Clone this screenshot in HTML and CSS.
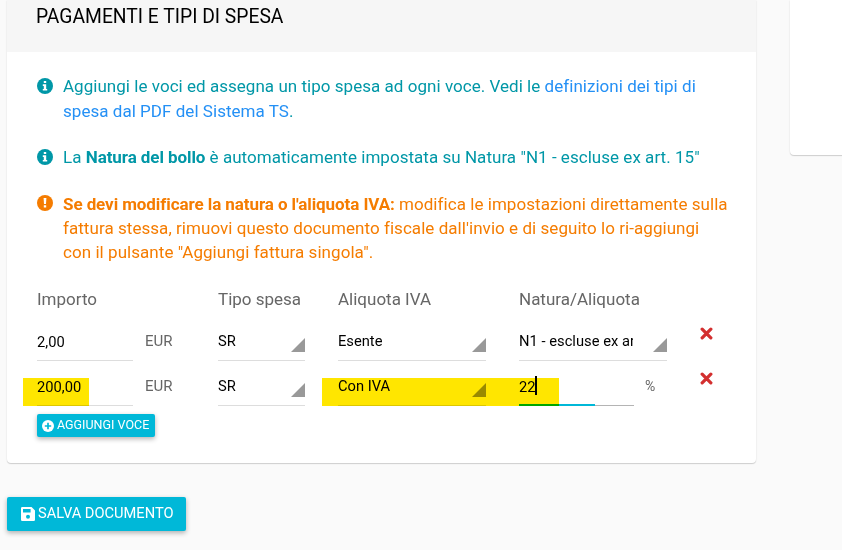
FILE: index.html
```html
<!DOCTYPE html>
<html lang="it">
<head>
<meta charset="utf-8">
<title>Pagamenti e tipi di spesa</title>
<link rel="stylesheet" href="styles.css">
</head>
<body>
<svg class="defs" aria-hidden="true">
  <symbol id="info" viewBox="0 0 16 16"><circle cx="8" cy="8" r="8" fill="currentColor"/><path fill="#fff" d="M6.8 3h2.4v2.1H6.8zM5.8 6.2h3.4v4.7h1v1.7H5.8v-1.7h1v-3h-1z"/></symbol>
  <symbol id="alert" viewBox="0 0 16 16"><circle cx="8" cy="8" r="8" fill="currentColor"/><path fill="#fff" d="M6.6 3h2.8L9 9.1H7zM6.8 10.2h2.4v2.3H6.8z"/></symbol>
  <symbol id="remove" viewBox="0 0 12 12"><path d="M2 2l8 8M10 2l-8 8" fill="none" stroke="currentColor" stroke-width="3" stroke-linecap="round"/></symbol>
</svg>
<div class="page">
  <main class="main">
    <section class="card">
      <h2 class="card-title">PAGAMENTI E TIPI DI SPESA</h2>
      <div class="card-body">
        <div class="note info intro"><svg class="note-icon"><use href="#info"/></svg><p>Aggiungi le voci ed assegna un tipo spesa ad ogni voce. Vedi le <a>definizioni dei tipi di<br>spesa dal PDF del Sistema TS</a>.</p></div>
        <div class="note info stamp"><svg class="note-icon"><use href="#info"/></svg><p>La <b>Natura del bollo</b> è automaticamente impostata su Natura "N1 - escluse ex art. 15"</p></div>
        <div class="note warn"><svg class="note-icon"><use href="#alert"/></svg><p><b>Se devi modificare la natura o l'aliquota IVA:</b> modifica le impostazioni direttamente sulla<br>fattura stessa, rimuovi questo documento fiscale dall'invio e di seguito lo ri-aggiungi<br>con il pulsante "Aggiungi fattura singola".</p></div>

        <div class="items">
          <div class="row head"><span class="wide">Importo</span><span>Tipo spesa</span><span>Aliquota IVA</span><span>Natura/Aliquota</span></div>
          <div class="row">
            <div class="field amount">2,00</div><span class="unit">EUR</span>
            <div class="field select">SR</div>
            <div class="field select">Esente</div>
            <div class="field select"><span class="clip">N1 - escluse ex art</span></div>
            <svg class="remove"><use href="#remove"/></svg>
          </div>
          <div class="row">
            <div class="field amount">200,00<i class="mark mark-amount"></i></div><span class="unit">EUR</span>
            <div class="field select">SR</div>
            <div class="field select">Con IVA</div>
            <div class="rate"><div class="field focus"><span class="typed">22</span></div><span class="percent">%</span><i class="mark mark-rate"></i></div>
            <svg class="remove"><use href="#remove"/></svg>
          </div>
        </div>
        <button class="btn small"><svg class="plus" viewBox="0 0 12 12"><circle cx="6" cy="6" r="6" fill="#fff"/><path d="M6 2.8v6.4M2.8 6h6.4" stroke="#00b8d8" stroke-width="1.7"/></svg><span>AGGIUNGI VOCE</span></button>
      </div>
    </section>
    <button class="btn large"><svg class="save" viewBox="0 0 14 14"><path fill="#fff" fill-rule="evenodd" d="M1.3 0H10.5L14 3.4V12.7A1.3 1.3 0 0 1 12.7 14H1.3A1.3 1.3 0 0 1 0 12.7V1.3A1.3 1.3 0 0 1 1.3 0zM2 2V5.4H9.6V2zM7 7.7A2 2 0 1 0 7 11.7A2 2 0 1 0 7 7.7z"/></svg><span>SALVA DOCUMENTO</span></button>
  </main>
  <aside class="side"></aside>
</div>
</body>
</html>
```
FILE: styles.css
```css
* { box-sizing: border-box; }
body {
  margin: 0;
  height: 550px;
  overflow: hidden;
  background: #fafafa;
  font-family: Roboto, "Liberation Sans", sans-serif;
  color: #000;
}
.defs { display: none; }
.page { display: flex; gap: 34px; padding-left: 7px; }
.main { flex: none; width: 749px; }
.card, .side {
  background: #fff;
  box-shadow: 0 1px 1px rgba(0,0,0,.16), 0 0 2px rgba(0,0,0,.08);
}
.card { height: 463px; border-radius: 0 0 4px 4px; }
.side { flex: none; width: 80px; height: 155px; border-radius: 0 0 0 4px; }
.card-title {
  margin: 0;
  height: 52px;
  padding: 4px 29px 0;
  background: #f6f6f6;
  font-size: 19.3px;
  font-weight: 400;
  line-height: 26px;
  white-space: nowrap;
}
.card-body { padding: 22px 30px 0; }
.note {
  display: flex;
  gap: 10px;
  font-size: 17px;
  letter-spacing: .035px;
}
.note b { letter-spacing: -.08px; }
.note p { margin: 0; white-space: nowrap; }
.note-icon { flex: none; width: 16px; height: 16px; margin-top: 4px; }
.intro { height: 71px; line-height: 25px; }
.stamp { height: 47px; line-height: 24px; }
.warn { height: 95px; line-height: 24px; letter-spacing: .05px; color: #f57c00; }
.warn .note-icon { margin-top: 3px; }
.info { color: #0097a7; }
.info a { color: #2490f5; }
.row {
  display: grid;
  grid-template-columns: 96px 85px 120px 181px 181px 14px;
  height: 45px;
}
.head { height: 36px; font-size: 17px; line-height: 25px; color: #666; white-space: nowrap; }
.wide { grid-column: span 2; }
.field {
  position: relative;
  height: 38px;
  padding-top: 8px;
  border-bottom: 1px solid #ddd;
  font-size: 14.7px;
  line-height: 20px;
  white-space: nowrap;
}
.amount { padding-top: 9px; }
.unit { padding: 8px 0 0 12px; font-size: 15px; line-height: 20px; color: #666; }
.select { margin-right: 33px; }
.select::after {
  content: "";
  position: absolute;
  right: 0;
  bottom: 8px;
  width: 14px;
  height: 14px;
  background: #999;
  clip-path: polygon(100% 0, 100% 100%, 0 100%);
}
.clip { display: block; width: 114px; overflow: hidden; letter-spacing: .03px; }
.rate { position: relative; display: flex; }
.focus {
  width: 115px;
  padding-top: 9px;
  border-color: #b4b4b4;
}
.focus::after {
  content: "";
  position: absolute;
  left: 0;
  bottom: -1px;
  width: 76px;
  height: 2px;
  background: #00b8d8;
}
.typed::after {
  content: "";
  position: absolute;
  left: 16px;
  top: 8px;
  width: 2px;
  height: 19px;
  background: #000;
}
.percent { padding: 8px 0 0 11px; font-size: 14px; line-height: 20px; color: #666; }
.mark { position: absolute; background: #ffe600; mix-blend-mode: multiply; }
.mark-amount { left: -14px; top: 10px; width: 66px; height: 28px; }
.mark-rate { left: -197px; top: 10px; width: 237px; height: 28px; }
.remove { width: 13px; height: 13px; margin-top: 4px; color: #d32f2f; }
.btn {
  display: flex;
  align-items: center;
  border: 0;
  border-radius: 2px;
  background: #00b8d8;
  color: #fff;
  font-family: inherit;
  white-space: nowrap;
  box-shadow: 0 2px 5px rgba(0,0,0,.3);
}
.small { width: 118px; height: 23px; margin-top: 1px; padding: 0 0 0 5px; gap: 3px; font-size: 12.5px; }
.small span, .large span { position: relative; top: -1px; }
.plus { flex: none; width: 12px; height: 12px; }
.large { width: 179px; height: 34px; margin-top: 34px; padding: 0 0 0 14px; gap: 3px; font-size: 14.65px; }
.save { flex: none; width: 14px; height: 14px; }
```
